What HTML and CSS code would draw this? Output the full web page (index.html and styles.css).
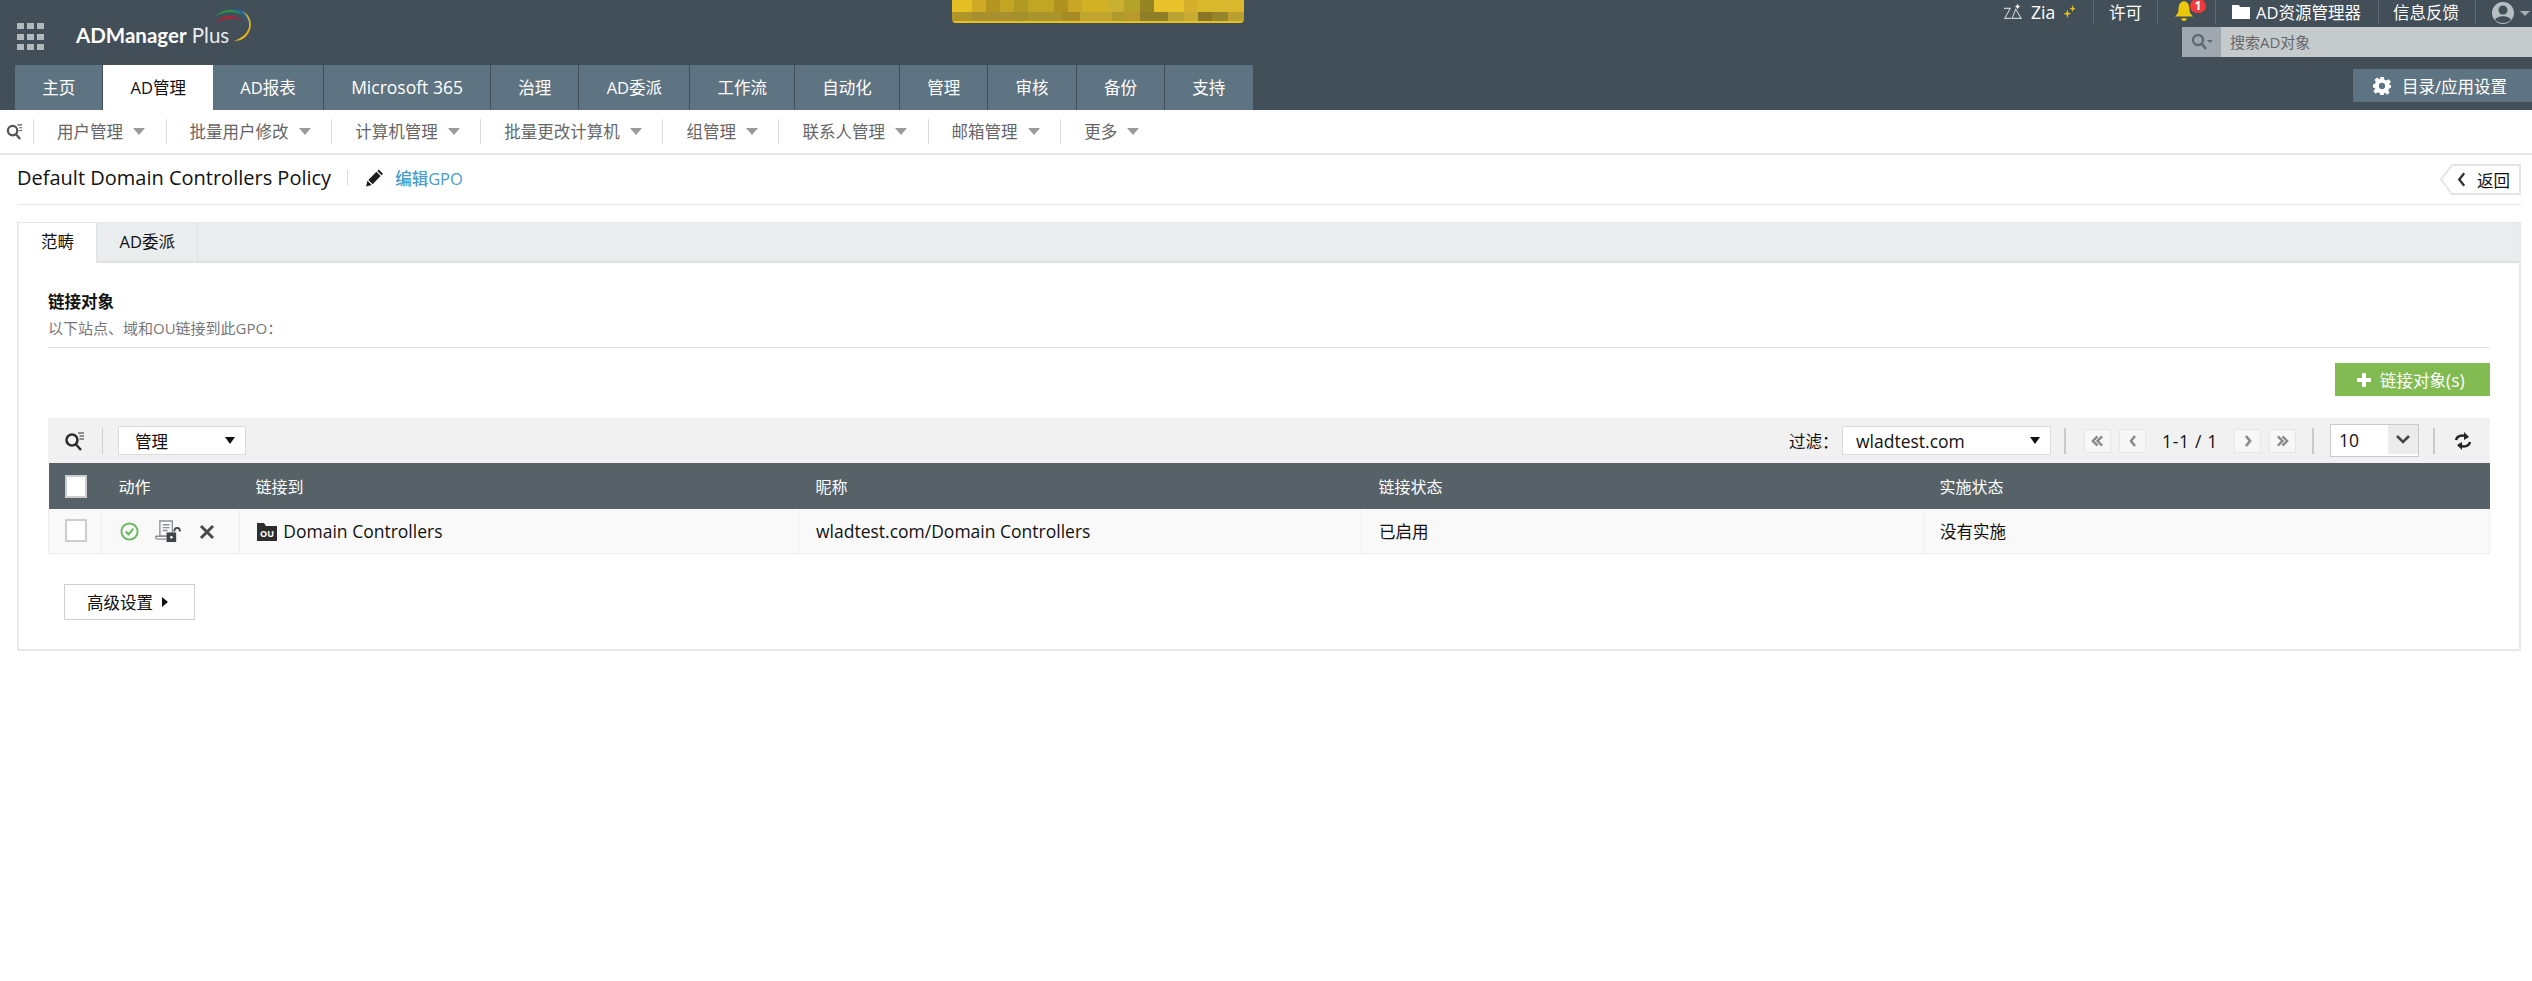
FILE: index.html
```html
<!DOCTYPE html>
<html lang="zh-CN">
<head>
<meta charset="utf-8">
<title>ADManager Plus</title>
<link rel="stylesheet" href="styles.css">
</head>
<body>
<header class="header">
  <div class="header-top">
    <div class="brand">
      <span class="apps"><i></i><i></i><i></i><i></i><i></i><i></i><i></i><i></i><i></i></span>
      <span class="logo-text"><b>ADManager</b> Plus</span>
      <svg class="logo-arcs" viewBox="0 0 40 36" width="40" height="36">
        <path d="M2 15C8 6 20 6 28 13C20 9 9 10 2 15Z" fill="#b0213a"/>
        <path d="M1 9C8 0 22 -1 31 8C22 3 9 3 1 9Z" fill="#2f8f4e"/>
        <path d="M18 1C28 0 36 6 36 18C33 9 27 4 18 1Z" fill="#1f63a8"/>
        <path d="M28 3C37 7 39 17 35 24C32 30 27 33 20 33C28 30 33 26 35 19C36 13 33 7 28 3Z" fill="#e7b416"/>
      </svg>
    </div>
    <div class="mosaic"></div>
    <div class="top-right">
      <nav class="util">
        <a class="util-item zia">
          <svg viewBox="0 0 22 20" width="20" height="20" fill="none" stroke="#c9ced1" stroke-width="1.2"><path d="M1 6H8L2 17H9"/><path d="M10 17L14 7L20 17Z"/><path d="M16 1L17 3L19 4L17 5L16 7L15 5L13 4L15 3Z" fill="#fff" stroke="none"/></svg>
          <span class="lat">Zia</span>
          <svg viewBox="0 0 16 16" width="14" height="16" fill="#e7c31a"><path d="M5 5L6 8.5L9.5 10L6 11L5 15L4 11L0.5 10L4 8.5Z"/><path d="M11 0L12 3L14.5 4L12 5L11 8L10 5L7.5 4L10 3Z"/></svg>
        </a>
        <a class="util-item lic">许可</a>
        <a class="util-item bell">
          <svg viewBox="0 0 20 24" width="18" height="22" fill="#eac80a"><path d="M10 0C6 0 4 4 4 9C4 13 2 15 0 17H20C18 15 16 13 16 9C16 4 14 0 10 0Z"/><path d="M7 19H13C13 21 12 22 10 22C8 22 7 21 7 19Z"/></svg>
          <span class="badge">1</span>
        </a>
        <a class="util-item explorer">
          <svg viewBox="0 0 18 14" width="18" height="14" fill="#fff"><path d="M0 0H7L8 2H18V14H0Z"/></svg>
          <span>AD资源管理器</span>
        </a>
        <a class="util-item feedback">信息反馈</a>
        <a class="util-item user">
          <svg viewBox="0 0 22 24" width="22" height="24"><circle cx="11" cy="12" r="11" fill="#b7bec2"/><circle cx="11" cy="9" r="4.5" fill="#434f58"/><path d="M3 19C5 14 17 14 19 19C15 23 7 23 3 19Z" fill="#434f58"/></svg>
          <i class="caret caret-user"></i>
        </a>
      </nav>
      <div class="global-search">
        <span class="search-seg">
          <svg viewBox="0 0 22 18" width="22" height="18" fill="none" stroke="#5f6a71" stroke-width="2.4"><circle cx="7" cy="7" r="5"/><path d="M11 11L15 16"/><path d="M16 7H22L19 10Z" fill="#5f6a71" stroke="none"/></svg>
        </span>
        <span class="search-text">搜索AD对象</span>
      </div>
    </div>
  </div>
  <div class="header-bottom">
    <nav class="tabs">
      <a class="tab">主页</a>
      <a class="tab active">AD管理</a>
      <a class="tab">AD报表</a>
      <a class="tab"><span class="lat">Microsoft 365</span></a>
      <a class="tab">治理</a>
      <a class="tab">AD委派</a>
      <a class="tab">工作流</a>
      <a class="tab">自动化</a>
      <a class="tab">管理</a>
      <a class="tab">审核</a>
      <a class="tab">备份</a>
      <a class="tab">支持</a>
    </nav>
    <a class="settings">
      <svg viewBox="0 0 20 20" width="18" height="18" fill="#fff"><path fill-rule="evenodd" d="M8 0H12L12.6 3L15 4L17.6 2.4L20 5.6L18 7.6L18.6 9H20V12L17.8 12.8L17 15L18.4 17.6L15.6 19.6L13.6 17.6L12 18.4L12 20H8L7.6 17.8L5.4 17L2.8 18.6L0.4 15.6L2.4 13.4L2 12H0V8L2.4 7.4L3 5.4L1.6 3L4.6 0.6L6.6 2.4L8 2Z M10 6.5A3.5 3.5 0 1 0 10 13.5A3.5 3.5 0 1 0 10 6.5Z"/></svg>
      <span>目录/应用设置</span>
    </a>
  </div>
</header>

<nav class="subnav">
  <span class="subnav-search">
    <svg viewBox="0 0 18 18" width="17" height="17" fill="none" stroke="#555" stroke-width="2.4"><circle cx="7" cy="8" r="5"/><path d="M10.5 12L15 17"/><path d="M12 2H17M14 5H17M14 8H17" stroke-width="1.2"/></svg>
  </span>
  <a class="sub-item">用户管理<i class="caret"></i></a>
  <a class="sub-item">批量用户修改<i class="caret"></i></a>
  <a class="sub-item">计算机管理<i class="caret"></i></a>
  <a class="sub-item">批量更改计算机<i class="caret"></i></a>
  <a class="sub-item">组管理<i class="caret"></i></a>
  <a class="sub-item">联系人管理<i class="caret"></i></a>
  <a class="sub-item">邮箱管理<i class="caret"></i></a>
  <a class="sub-item last">更多<i class="caret"></i></a>
</nav>

<div class="title-row">
  <h1 class="page-title">Default Domain Controllers Policy</h1>
  <span class="title-sep"></span>
  <a class="edit-link">
    <svg viewBox="0 0 18 18" width="17" height="18" fill="#1d1d1d"><path d="M0 18L1.5 12L6 16.5Z"/><path d="M2.5 11L11 2.5L15.5 7L7 15.5Z"/><path d="M12 1.5L13.5 0L18 4.5L16.5 6Z"/></svg>
    <span>编辑GPO</span>
  </a>
  <a class="back">
    <svg class="back-shape" viewBox="0 0 81 31" width="81" height="31" fill="#fff" stroke="#e4e4e4" stroke-width="2"><path d="M80 1H12L1 15.5L12 30H80Z"/></svg>
    <svg class="back-arrow" viewBox="0 0 10 16" width="9" height="15" fill="none" stroke="#333" stroke-width="2.6"><path d="M8 1L2.5 8L8 15"/></svg>
    <span class="back-text">返回</span>
  </a>
</div>

<main class="panel">
  <div class="panel-tabs">
    <a class="ptab active">范畴</a>
    <a class="ptab">AD委派</a>
  </div>
  <div class="panel-body">
    <h2 class="section-title">链接对象</h2>
    <p class="section-sub">以下站点、域和OU链接到此GPO：</p>
    <div class="action-row">
      <a class="btn-green">
        <svg viewBox="0 0 14 14" width="14" height="14" fill="#fff"><path d="M5 0H9V5H14V9H9V14H5V9H0V5H5Z"/></svg>
        <span>链接对象<span class="lat">(s)</span></span>
      </a>
    </div>
    <div class="toolbar">
      <span class="tool-search">
        <svg viewBox="0 0 20 20" width="20" height="20" fill="none" stroke="#2f2f2f" stroke-width="2.6"><circle cx="8" cy="9" r="5.5"/><path d="M12 13.5L17 19"/><path d="M14 2H20M15.5 5H20M15.5 8H20" stroke-width="1.2"/></svg>
      </span>
      <span class="tool-sep"></span>
      <div class="select select-manage"><span>管理</span><i class="caret caret-dark"></i></div>
      <div class="tool-right">
        <span class="filter-label">过滤：</span>
        <div class="select select-filter"><span class="lat">wladtest.com</span><i class="caret caret-dark"></i></div>
        <span class="tool-sep sep-a"></span>
        <a class="page-btn"><svg viewBox="0 0 14 12" width="13" height="12" fill="none" stroke="#8a8a8a" stroke-width="2.6"><path d="M7 1L2 6L7 11M12 1L7 6L12 11"/></svg></a>
        <a class="page-btn"><svg viewBox="0 0 8 12" width="8" height="12" fill="none" stroke="#8a8a8a" stroke-width="2.6"><path d="M6 1L2 6L6 11"/></svg></a>
        <span class="page-count lat">1-1 / 1</span>
        <a class="page-btn"><svg viewBox="0 0 8 12" width="8" height="12" fill="none" stroke="#8a8a8a" stroke-width="2.6"><path d="M2 1L6 6L2 11"/></svg></a>
        <a class="page-btn"><svg viewBox="0 0 14 12" width="13" height="12" fill="none" stroke="#8a8a8a" stroke-width="2.6"><path d="M2 1L7 6L2 11M7 1L12 6L7 11"/></svg></a>
        <span class="tool-sep sep-b"></span>
        <div class="page-size"><span class="size-val lat">10</span><span class="size-arrow"><svg viewBox="0 0 14 9" width="14" height="9" fill="none" stroke="#444" stroke-width="2.6"><path d="M1 1L7 7L13 1"/></svg></span></div>
        <span class="tool-sep sep-c"></span>
        <svg class="refresh" viewBox="0 0 18 20" width="18" height="20" fill="none" stroke="#222" stroke-width="2.4"><path d="M2 9C3 5 8 3 13 6"/><path d="M16 11C15 15 10 17 5 14"/><path d="M10 1L15 6L10 9Z" fill="#222" stroke="none"/><path d="M8 19L3 14L8 11Z" fill="#222" stroke="none"/></svg>
      </div>
    </div>
    <table class="grid">
      <colgroup>
        <col class="c-check"><col class="c-action"><col class="c-link"><col class="c-name"><col class="c-state"><col class="c-enforce">
      </colgroup>
      <thead>
        <tr>
          <th class="cell-check"><input class="check" type="checkbox"></th>
          <th>动作</th>
          <th class="th-link">链接到</th>
          <th>昵称</th>
          <th>链接状态</th>
          <th class="th-last">实施状态</th>
        </tr>
      </thead>
      <tbody>
        <tr>
          <td class="cell-check"><input class="check" type="checkbox"></td>
          <td class="cell-actions">
            <svg viewBox="0 0 20 20" width="19" height="19" fill="none" stroke="#6cb862" stroke-width="2"><circle cx="10" cy="10" r="8.5"/><path d="M6 10L9 13L14 7" stroke-width="2.2"/></svg>
            <svg viewBox="0 0 28 24" width="27" height="23"><path d="M5 1H18V17H5Z" fill="none" stroke="#8b9196" stroke-width="1.4"/><path d="M8 5H15M8 8H15M8 11H13" stroke="#8b9196" stroke-width="1.4"/><path d="M1 17H13C14 20 12 20 11 20H3C1 20 0 18 1 17Z" fill="none" stroke="#8b9196" stroke-width="1.4"/><rect x="12" y="13" width="10" height="10" fill="#3f4446"/><circle cx="17" cy="18" r="1.4" fill="#fff"/><path d="M20 12C20 7 26 7 26 12" fill="none" stroke="#3f4446" stroke-width="1.8"/></svg>
            <svg viewBox="0 0 16 16" width="16" height="16" fill="none" stroke="#4b4b4b" stroke-width="3"><path d="M2 2L14 14M14 2L2 14"/></svg>
          </td>
          <td class="cell-ou">
            <svg viewBox="0 0 20 18" width="20" height="18"><path d="M0 0H7L9 3H20V18H0Z" fill="#2e2e2e"/><text x="10" y="14" text-anchor="middle" class="ou-text">OU</text></svg>
            <span class="lat">Domain Controllers</span>
          </td>
          <td class="lat">wladtest.com/Domain Controllers</td>
          <td>已启用</td>
          <td class="td-last">没有实施</td>
        </tr>
      </tbody>
    </table>
    <a class="btn-advanced">高级设置<i class="caret-right"></i></a>
  </div>
</main>
</body>
</html>
```
FILE: styles.css
```css
* { box-sizing: border-box; }
html, body { margin: 0; padding: 0; }
body {
  background: #fff;
  color: #111;
  font-family: "Open Sans", "Noto Sans CJK SC", sans-serif;
  font-size: 16.5px;
  overflow: hidden;
}
a { color: inherit; text-decoration: none; }
.lat { font-size: 17.5px; }

.header { background: #434f58; height: 110px; }
.header-top { display: flex; height: 65px; position: relative; }
.brand { display: flex; width: 952px; flex: none; position: relative; }
.apps {
  display: grid;
  grid-template-columns: repeat(3, 7px);
  grid-auto-rows: 6px;
  gap: 4.5px 3px;
  margin: 23px 0 0 17px;
  height: 27px;
}
.apps i { background: #b3b8bb; display: block; }
.logo-text {
  margin: 23px 0 0 32px;
  font-family: Lato, "Open Sans", sans-serif;
  font-size: 20.5px;
  line-height: 24px;
  color: #e9ebec;
  font-weight: 400;
  white-space: nowrap;
  height: 24px;
}
.logo-text b { font-weight: 700; color: #fff; }
.logo-arcs { margin: 8px 0 0 -15px; flex: none; }

.mosaic {
  width: 292px;
  height: 23px;
  flex: none;
  border-radius: 0 0 4px 4px;
  background-color: #e8c020;
  background-image:
    linear-gradient(90deg, #e6bf25 0 20px, #d0a926 0 34px, #b3951f 0 48px, #c2a523 0 62px, #b09a24 0 76px, #c0a622 0 102px, #b0921f 0 116px, #c9a625 0 130px, #d1b225 0 156px, #c9b030 0 172px, #b5a228 0 188px, #968520 0 202px, #e8c22a 0 232px, #d4b02c 0 246px, #d9b82d 0 292px),
    linear-gradient(90deg, #b0952a 0 20px, #a89030 0 60px, #a4912e 0 76px, #a8952c 0 110px, #a58a26 0 128px, #bfa530 0 160px, #b09a30 0 172px, #b89a2c 0 188px, #8f7e28 0 216px, #b9a232 0 232px, #c9ac34 0 246px, #8a7524 0 260px, #96842a 0 276px, #b9a030 0 292px);
  background-size: 100% 12px, 100% 9px;
  background-position: 0 0, 0 12px;
  background-repeat: no-repeat;
}
.top-right { margin-left: auto; width: 529px; display: flex; flex-direction: column; flex: none; }
.util { display: flex; height: 27px; align-items: stretch; color: #fff; }
.util-item { display: flex; align-items: center; position: relative; height: 24px; border-right: 1px solid #5f6b73; white-space: nowrap; }
.util-item.zia { width: 91px; gap: 8px; }
.util-item.lic { width: 64px; padding-left: 15px; }
.util-item.bell { width: 58px; padding-left: 17px; }
.badge {
  position: absolute;
  left: 32px;
  top: -1px;
  width: 16px;
  height: 14px;
  border-radius: 8px;
  background: #ee3a3a;
  color: #fff;
  font-size: 12px;
  font-weight: 700;
  line-height: 14px;
  text-align: center;
}
.util-item.explorer { width: 163px; padding-left: 16px; gap: 6px; }
.util-item.feedback { width: 97px; padding-left: 14px; }
.util-item.user { border: 0; padding-left: 16px; gap: 6px; height: 26px; }
.caret {
  display: inline-block;
  width: 0;
  height: 0;
  border-left: 6px solid transparent;
  border-right: 6px solid transparent;
  border-top: 7px solid #9a9a9a;
  margin-left: 10px;
}
.caret-user { margin-left: 0; border-left-width: 5px; border-right-width: 5px; border-top-color: #a9b0b4; border-top-width: 5px; }
.caret-dark { border-top-color: #111; border-left-width: 5.5px; border-right-width: 5.5px; margin: 0; }
.global-search { display: flex; height: 30px; width: 350px; margin-left: auto; }
.search-seg { width: 39px; background: #9fa8ae; display: flex; align-items: center; justify-content: center; }
.search-text {
  flex: 1;
  background: #c5cacd;
  color: #666;
  font-size: 15px;
  line-height: 30px;
  padding-left: 9px;
}

.header-bottom { display: flex; justify-content: space-between; height: 45px; }
.tabs { display: flex; margin-left: 15px; }
.tab {
  background: #5f7482;
  color: #fff;
  height: 45px;
  line-height: 45px;
  padding: 0 27.2px;
  border-right: 1px solid #434f58;
  white-space: nowrap;
}
.tab:last-child { border-right: 0; }
.tab.active { background: #fff; color: #111; border-right: 0; }
.settings {
  width: 179px;
  height: 33px;
  margin-top: 4px;
  background: #5f7482;
  color: #fff;
  display: flex;
  align-items: center;
  gap: 11px;
  padding-left: 20px;
  white-space: nowrap;
}

.subnav { display: flex; align-items: center; height: 45px; border-bottom: 2px solid #e6e6e6; color: #666; }
.subnav-search { width: 34px; padding-left: 6px; height: 25px; display: flex; align-items: center; border-right: 1px solid #ddd; flex: none; }
.sub-item {
  height: 25px;
  line-height: 25px;
  padding: 0 20.6px 0 23px;
  border-right: 1px solid #ddd;
  display: flex;
  align-items: center;
  white-space: nowrap;
}
.sub-item.last { border-right: 0; }

.title-row { display: flex; align-items: center; height: 50px; margin: 0 11px 0 17px; border-bottom: 1px solid #e6e6e6; }
.page-title { margin: 0 0 4px; font-size: 20px; font-weight: 400; color: #111; white-space: nowrap; }
.title-sep { width: 1px; height: 16px; background: #ddd; margin: 0 0 4px 16px; flex: none; }
.edit-link { display: flex; align-items: center; gap: 12px; margin: 0 0 4px 18px; color: #4a9cc7; font-weight: 500; white-space: nowrap; }
.back {
  margin-left: auto;
  width: 81px;
  height: 31px;
  display: flex;
  align-items: center;
  gap: 11px;
  padding-left: 17px;
  color: #111;
  position: relative;
}
.back-shape { position: absolute; left: 0; top: 0; }
.back-arrow, .back-text { position: relative; }

.panel { margin: 17px 11px 0 17px; border: 2px solid #e8e8e8; border-top-width: 1px; height: 429px; }
.panel-tabs { display: flex; height: 40px; background: #eaeded; border-bottom: 2px solid #e0e0e0; }
.ptab { padding: 0 22.5px; line-height: 38px; border-right: 1px solid #e0e0e0; height: 38px; }
.ptab.active { background: #fff; height: 40px; width: 78px; padding: 0 22px; }
.panel-body { padding: 0 29px; }
.section-title { margin: 29px 0 0; font-size: 16.5px; line-height: 20px; font-weight: 700; color: #111; }
.section-sub { margin: 6px 0 0; padding-bottom: 9px; font-size: 15px; line-height: 20px; color: #777; border-bottom: 1px solid #e3e3e3; }
.action-row { display: flex; justify-content: flex-end; margin-top: 15px; }
.btn-green {
  width: 155px;
  height: 33px;
  background: #82bb51;
  color: #fff;
  display: flex;
  align-items: center;
  gap: 9px;
  padding-left: 22px;
  white-space: nowrap;
}
.toolbar { display: flex; align-items: center; height: 45px; margin-top: 22px; background: #f1f1f1; }
.tool-search { width: 36px; padding-left: 16px; display: flex; flex: none; }
.tool-search svg { flex: none; }
.tool-sep { width: 1px; height: 26px; background: #cfcfcf; flex: none; margin-left: 18px; }
.select {
  background: #fff;
  border: 1px solid #dcdcdc;
  height: 29px;
  display: flex;
  align-items: center;
  justify-content: space-between;
  padding: 0 10px 0 16px;
  flex: none;
}
.select-manage { width: 128px; margin-left: 15px; }
.tool-right { margin-left: auto; display: flex; align-items: center; }
.filter-label { margin-right: 6px; white-space: nowrap; width: 47px; }
.select-filter { width: 209px; padding-left: 13px; }
.sep-a { margin: 0 18px 0 13px; width: 2px; background: #c9c9c9; }
.page-btn {
  width: 27px;
  height: 24px;
  background: #f7f7f7;
  border: 1px solid #e6e6e6;
  display: flex;
  align-items: center;
  justify-content: center;
  flex: none;
}
.page-btn + .page-btn { margin-left: 8px; }
.page-count { width: 88px; text-align: center; white-space: nowrap; letter-spacing: 0.7px; }
.sep-b { margin: 0 16px; width: 2px; background: #c9c9c9; }
.page-size { width: 89px; height: 33px; display: flex; background: #fff; border: 1px solid #c9c9c9; flex: none; }
.size-val { width: 57px; padding-left: 8px; line-height: 31px; }
.size-arrow { flex: 1; background: #ececec; height: 29px; display: flex; align-items: center; justify-content: center; }
.sep-c { margin: 0 19px 0 14px; width: 2px; background: #c9c9c9; }
.refresh { margin-right: 18px; flex: none; }

.grid { width: 100%; table-layout: fixed; border-collapse: collapse; }
.c-check { width: 53px; }
.c-action { width: 138px; }
.c-link { width: 559px; }
.c-name { width: 563px; }
.c-state { width: 562px; }
.grid th {
  background: #566168;
  color: #fff;
  height: 46px;
  font-weight: 400;
  text-align: left;
  padding: 0 0 0 17px;
  font-size: 16px;
}
.grid td {
  background: #f9f9f9;
  height: 44px;
  padding: 0 0 0 17px;
  border: 1px solid #eeeeee;
  border-top: 0;
  white-space: nowrap;
}
.grid .th-link { padding-left: 16px; }
.grid .th-last, .grid .td-last { padding-left: 16px; }
.grid .cell-check { padding-left: 16px; }
.check {
  appearance: none;
  display: block;
  margin: 0;
  width: 22px;
  height: 23px;
  background: #fff;
  border: 2px solid #cdcdcd;
}
.grid .cell-actions { padding-left: 18px; }
.cell-actions svg { vertical-align: middle; }
.cell-actions svg + svg { margin-left: 12px; }
.cell-ou svg { vertical-align: -3px; margin-right: 2px; }
.ou-text { font-family: "Open Sans", sans-serif; font-size: 9px; font-weight: 700; fill: #fff; }
.btn-advanced {
  display: flex;
  align-items: center;
  width: 131px;
  height: 36px;
  margin: 30px 0 0 16px;
  padding-left: 22px;
  border: 1px solid #cfcfcf;
  background: #fff;
  white-space: nowrap;
}
.caret-right {
  display: inline-block;
  width: 0;
  height: 0;
  margin-left: 9px;
  border-top: 5px solid transparent;
  border-bottom: 5px solid transparent;
  border-left: 6px solid #111;
}
```
